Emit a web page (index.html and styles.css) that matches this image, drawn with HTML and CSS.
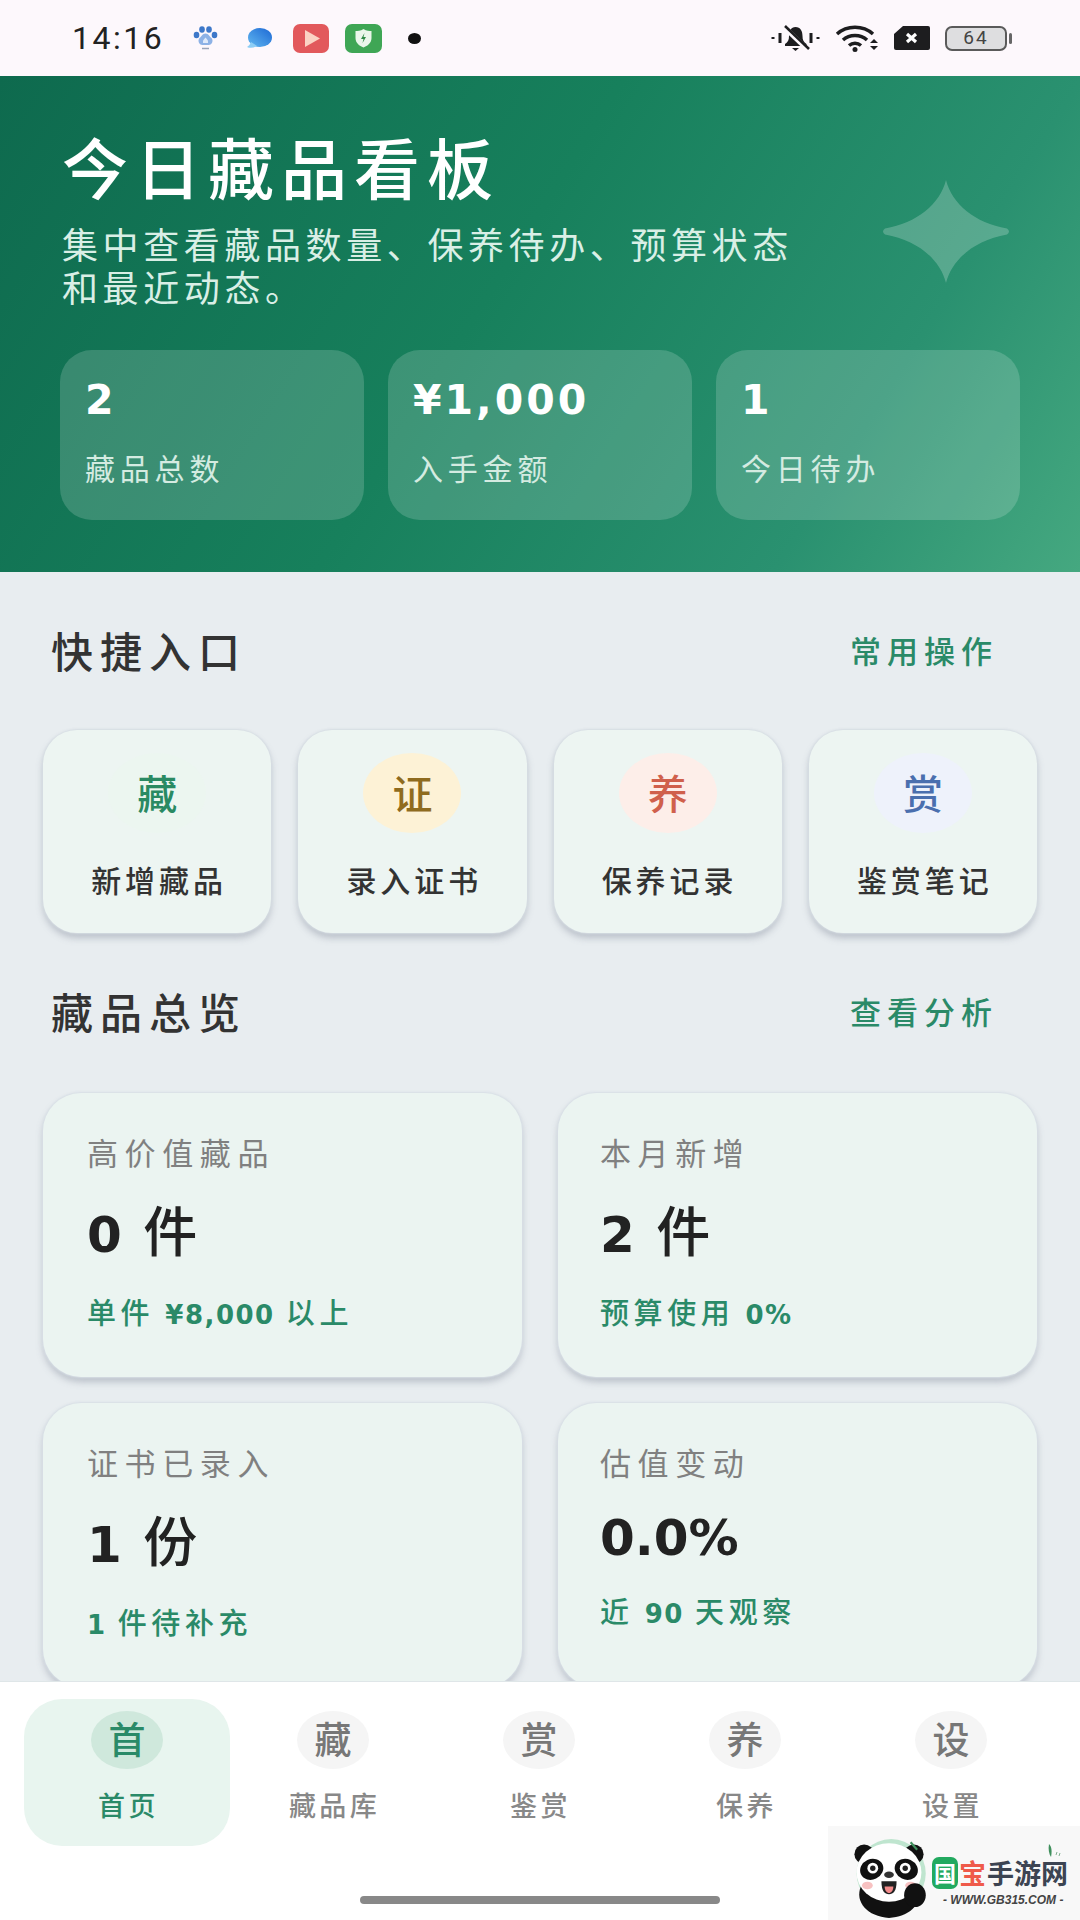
FILE: index.html
```html
<!DOCTYPE html>
<html lang="zh">
<head>
	<title>今日藏品看板</title>
	<meta charset="utf-8">
	<meta name="viewport" content="width=device-width, initial-scale=1">
	<link rel="stylesheet" href="styles.css">
</head>
<body>
<div class="screen">

	<!-- status bar -->
	<header class="status">
		<span class="time">14:16</span>
		<svg class="ic-paw" width="25" height="24" viewBox="0 0 25 24">
			<ellipse cx="3.500" cy="9" rx="2.800" ry="3.200" fill="#3d78c9"/>
			<ellipse cx="9" cy="3.500" rx="2.800" ry="3.200" fill="#3d78c9"/>
			<ellipse cx="16" cy="3.500" rx="2.800" ry="3.200" fill="#3d78c9"/>
			<ellipse cx="21.500" cy="9" rx="2.800" ry="3.200" fill="#3d78c9"/>
			<path d="M12.500 7.500c3 0 4 3 6 4.600 2 2 1 7-3 7h-6c-4 0-5-5-3-7 2-1.600 3-4.600 6-4.600z" fill="#8db2e6"/>
			<path d="M10 14.500l2.500-3 2.500 3v2.500h-5z" fill="#dfeafa"/>
			<path d="M9 22.500h7" stroke="#9aa4b8" stroke-width="1.500"/>
		</svg>
		<svg class="ic-ball" width="26" height="21" viewBox="0 0 26 21">
			<defs>
				<linearGradient id="ball" x1="1" y1="0" x2="0" y2="1">
					<stop offset="0" stop-color="#1c68d4"/>
					<stop offset="1" stop-color="#62b8f0"/>
				</linearGradient>
			</defs>
			<ellipse cx="14" cy="9.500" rx="12" ry="9.500" fill="url(#ball)"/>
			<path d="M5 14c-1 2-2 4-4 5 3 1.500 7 1 10-1z" fill="#8ccdf5"/>
		</svg>
		<svg class="ic-red" width="36" height="29" viewBox="0 0 36 29">
			<rect width="36" height="29" rx="7" fill="#e2595c"/>
			<path d="M12 6l15 8.500-15 8.500z" fill="#fbd3c4"/>
		</svg>
		<svg class="ic-green" width="37" height="29" viewBox="0 0 37 29">
			<rect width="37" height="29" rx="7" fill="#3fa655"/>
			<path d="M18.500 5c3 2 6 2 8 2v7c0 5-4 8-8 9.500-4-1.500-8-4.500-8-9.500V7c2 0 5 0 8-2z" fill="#eaf6ea"/>
			<path d="M19.500 9l-3.500 6h2.500l-1 4 3.500-6h-2.500z" fill="#2f8a45"/>
		</svg>
		<span class="dot"></span>

		<div class="status-right">
			<svg width="49" height="28" viewBox="0 0 49 28">
				<path d="M24.500 3c5 0 7 4 7 9 0 4 1 6 4 8v2H14v-2c3-2 4-4 4-8 0-5 2-9 6.500-9z" fill="#1d1d1f"/>
				<path d="M21 24h7l-3.500 3z" fill="#1d1d1f"/>
				<path d="M13 3l24 23" stroke="#fdf8fc" stroke-width="5"/>
				<path d="M14 2l24 23" stroke="#1d1d1f" stroke-width="2.500"/>
				<path d="M9 9v10M40 9v10" stroke="#1d1d1f" stroke-width="3"/>
				<path d="M2 13v2M47 13v2" stroke="#1d1d1f" stroke-width="3"/>
			</svg>
			<svg width="44" height="27" viewBox="0 0 44 27">
				<path d="M2 9c10-9 26-9 36 0" fill="none" stroke="#1d1d1f" stroke-width="3.500"/>
				<path d="M8 15c6.500-6 17.500-6 24 0" fill="none" stroke="#1d1d1f" stroke-width="3.500"/>
				<path d="M14 20.500c3.500-3 8.500-3 12 0" fill="none" stroke="#1d1d1f" stroke-width="3.500"/>
				<circle cx="20" cy="24.500" r="2.500" fill="#1d1d1f"/>
				<path d="M35 18h8l-4-4zM35 21h8l-4 4z" fill="#1d1d1f"/>
			</svg>
			<svg width="36" height="24" viewBox="0 0 36 24">
				<path d="M9 0h25a2 2 0 0 1 2 2v20a2 2 0 0 1-2 2H2a2 2 0 0 1-2-2V8z" fill="#1d1d1f"/>
				<path d="M13 8l9 8M22 8l-9 8" stroke="#fff" stroke-width="3.200"/>
			</svg>
			<div class="battery">
				<div class="battery-body">64</div>
				<span class="battery-nub"></span>
			</div>
		</div>
	</header>

	<!-- board header -->
	<section class="hero">
		<h1>今日藏品看板</h1>
		<p class="hero-desc">集中查看藏品数量、保养待办、预算状态<br>和最近动态。</p>
		<svg class="hero-star" width="130" height="103" viewBox="0 0 130 103">
			<path d="M65 0C71 24 94 43 126 48.500Q130 51.500 126 54.500C94 60 71 79 65 103C59 79 36 60 4 54.500Q0 51.500 4 48.500C36 43 59 24 65 0Z" fill="#fff" fill-opacity=".22"/>
		</svg>
		<div class="stats">
			<div class="stat">
				<div class="stat-num">2</div>
				<div class="stat-label">藏品总数</div>
			</div>
			<div class="stat">
				<div class="stat-num">¥1,000</div>
				<div class="stat-label">入手金额</div>
			</div>
			<div class="stat">
				<div class="stat-num">1</div>
				<div class="stat-label">今日待办</div>
			</div>
		</div>
	</section>

	<main class="content">
		<div class="sec-head">
			<h2>快捷入口</h2>
			<a class="sec-link">常用操作</a>
		</div>
		<div class="tiles">
			<div class="tile">
				<span class="tile-icon green">藏</span>
				<span class="tile-label">新增藏品</span>
			</div>
			<div class="tile">
				<span class="tile-icon amber">证</span>
				<span class="tile-label">录入证书</span>
			</div>
			<div class="tile">
				<span class="tile-icon red">养</span>
				<span class="tile-label">保养记录</span>
			</div>
			<div class="tile">
				<span class="tile-icon blue">赏</span>
				<span class="tile-label">鉴赏笔记</span>
			</div>
		</div>

		<div class="sec-head sec-head-2">
			<h2>藏品总览</h2>
			<a class="sec-link">查看分析</a>
		</div>
		<div class="cards">
			<div class="card">
				<div class="card-label">高价值藏品</div>
				<div class="card-value">0 <span class="unit">件</span></div>
				<div class="card-sub">单件 <span class="num">¥8,000</span> 以上</div>
			</div>
			<div class="card">
				<div class="card-label">本月新增</div>
				<div class="card-value">2 <span class="unit">件</span></div>
				<div class="card-sub">预算使用 <span class="num">0%</span></div>
			</div>
			<div class="card">
				<div class="card-label">证书已录入</div>
				<div class="card-value">1 <span class="unit">份</span></div>
				<div class="card-sub"><span class="num">1</span> 件待补充</div>
			</div>
			<div class="card">
				<div class="card-label">估值变动</div>
				<div class="card-value card-value-plain">0.0%</div>
				<div class="card-sub">近 <span class="num">90</span> 天观察</div>
			</div>
		</div>
	</main>

	<!-- bottom tabs -->
	<nav class="tabs">
		<div class="tab active"><span class="tab-icon">首</span><span class="tab-label">首页</span></div>
		<div class="tab"><span class="tab-icon">藏</span><span class="tab-label">藏品库</span></div>
		<div class="tab"><span class="tab-icon">赏</span><span class="tab-label">鉴赏</span></div>
		<div class="tab"><span class="tab-icon">养</span><span class="tab-label">保养</span></div>
		<div class="tab"><span class="tab-icon">设</span><span class="tab-label">设置</span></div>
	</nav>
	<div class="home-bar"></div>

	<!-- site watermark, sits over the corner -->
	<div class="mark">
		<svg class="panda" width="88" height="80" viewBox="0 0 80 74">
			<circle cx="42" cy="32" r="32" fill="#bfe5cf"/>
			<path d="M14 44C8 58 20 72 40 73C58 72 70 62 70 44z" fill="#111"/>
			<circle cx="17" cy="14" r="9" fill="#111"/>
			<circle cx="63" cy="14" r="9" fill="#111"/>
			<ellipse cx="40" cy="31" rx="30" ry="27" fill="#fff"/>
			<ellipse cx="24" cy="28" rx="11" ry="9.500" fill="#111" transform="rotate(-25 24 28)"/>
			<ellipse cx="56" cy="28" rx="11" ry="9.500" fill="#111" transform="rotate(25 56 28)"/>
			<circle cx="25" cy="27" r="5" fill="#fff"/>
			<circle cx="55" cy="27" r="5" fill="#fff"/>
			<circle cx="25" cy="27" r="2.500" fill="#222"/>
			<circle cx="55" cy="27" r="2.500" fill="#222"/>
			<ellipse cx="40" cy="33" rx="4.500" ry="3" fill="#333"/>
			<path d="M33 39h14c0 9-3 12-7 12s-7-3-7-12z" fill="#222"/>
			<path d="M36 44h8c0 4-2 6-4 6s-4-2-4-6z" fill="#f28a8a"/>
			<ellipse cx="20" cy="43" rx="5" ry="3.500" fill="#f7c1c1"/>
			<ellipse cx="60" cy="43" rx="5" ry="3.500" fill="#f7c1c1"/>
			<ellipse cx="64" cy="52" rx="10" ry="11" fill="#111"/>
			<path d="M60 3l6 7" stroke="#3f8f5c" stroke-width="2"/>
		</svg>
		<div class="mark-text">
			<div class="mark-name">
				<span class="mark-box">国</span><span class="mark-red">宝</span><span>手游网</span>
			</div>
			<div class="mark-url">- WWW.GB315.COM -</div>
		</div>
		<svg class="mark-leaf" width="14" height="16" viewBox="0 0 14 16">
			<path d="M2 1c3 3 3 8 2 13-2-3-3-8-2-13z" fill="#3f8f5c"/>
			<path d="M9 12l1-3M12 13l1-3" stroke="#7fae8e" stroke-width="1"/>
		</svg>
	</div>

</div>
</body>
</html>
```

FILE: styles.css
```css
* {
	box-sizing: border-box;
}

body {
	margin: 0;
	background: #e8edf0;
	font-family: "Noto Sans CJK SC", "Noto Sans", sans-serif;
}

.screen {
	position: relative;
	width: 1080px;
	height: 1920px;
	overflow: hidden;
	display: flex;
	flex-direction: column;
}

/* status bar */
.status {
	height: 76px;
	flex: none;
	display: flex;
	align-items: center;
	padding: 0 68px 0 72px;
	background: #fdf8fc;
}
.time {
	font-family: Roboto, sans-serif;
	font-size: 32px;
	letter-spacing: 2.5px;
	color: #222;
	width: 93px;
}
.status svg {
	flex: none;
}
.ic-paw {
	margin-left: 28px;
}
.ic-ball {
	margin-left: 28px;
}
.ic-red {
	margin-left: 21px;
}
.ic-green {
	margin-left: 16px;
}
.dot {
	width: 13px;
	height: 11px;
	margin-left: 26px;
	border-radius: 50%;
	background: #111;
}
.status-right {
	margin-left: auto;
	display: flex;
	align-items: center;
	gap: 15px;
}
.battery {
	display: flex;
	align-items: center;
	gap: 2px;
}
.battery-body {
	width: 62px;
	height: 25px;
	border: 2.5px solid #5a5a5a;
	border-radius: 7px;
	background: #dedee0;
	text-align: center;
	font-family: Roboto, sans-serif;
	font-size: 19px;
	line-height: 20px;
	letter-spacing: 2px;
	color: #444;
}
.battery-nub {
	width: 3px;
	height: 11px;
	border-radius: 2px;
	background: #666;
}

/* hero */
.hero {
	position: relative;
	height: 496px;
	flex: none;
	padding: 41px 60px 0;
	background: linear-gradient(122deg, #0e6a4e 0%, #17805c 45%, #2a9170 78%, #45a880 100%);
	color: #fff;
}
.hero h1 {
	margin: 0;
	padding-left: 2px;
	font-size: 66px;
	font-weight: 500;
	line-height: 96px;
	letter-spacing: 7px;
}
.hero-desc {
	margin: 9px 0 0;
	padding-left: 2px;
	font-size: 36px;
	line-height: 43px;
	letter-spacing: 4.6px;
	color: #d9efe6;
}
.hero-star {
	position: absolute;
	left: 881px;
	top: 104px;
}
.stats {
	display: flex;
	gap: 24px;
	margin-top: 42px;
}
.stat {
	flex: 1;
	height: 170px;
	padding: 25px 25px 0;
	border-radius: 32px;
	background: rgba(255, 255, 255, .17);
}
.stat-num {
	font-family: "DejaVu Sans", sans-serif;
	font-size: 41px;
	font-weight: 700;
	line-height: 50px;
	letter-spacing: 3px;
}
.stat-label {
	margin-top: 22px;
	font-size: 30px;
	line-height: 40px;
	letter-spacing: 4.8px;
	color: #d4ebe1;
}

/* page content */
.content {
	flex: 1;
	min-height: 0;
	overflow: hidden;
	padding-top: 49px;
}
.sec-head {
	display: flex;
	justify-content: space-between;
	align-items: center;
	height: 56px;
	padding: 0 82px 0 51px;
	margin-bottom: 53px;
}
.sec-head-2 {
	margin-top: 49px;
	margin-bottom: 55px;
}
.sec-head h2 {
	margin: 0;
	font-size: 42px;
	font-weight: 500;
	letter-spacing: 7px;
	color: #333;
}
.sec-link {
	font-size: 31px;
	font-weight: 500;
	letter-spacing: 6px;
	color: #2a8a68;
}

.tiles {
	display: grid;
	grid-template-columns: repeat(4, 1fr);
	gap: 27px;
	padding: 0 43px;
}
.tile {
	height: 203px;
	padding-top: 23px;
	display: flex;
	flex-direction: column;
	align-items: center;
	border-radius: 34px;
	background: #edf5f2;
	box-shadow: 0 0 2px 1px #d6dde3, 0 5px 7px rgba(100, 110, 130, .35);
}
.tile-icon {
	width: 98px;
	height: 80px;
	border-radius: 50%;
	font-size: 40px;
	font-weight: 500;
	line-height: 78px;
	text-align: center;
}
.tile-icon.green {
	background: #ecf6f0;
	color: #2a8a63;
}
.tile-icon.amber {
	background: #fdf2d6;
	color: #8f6b1e;
}
.tile-icon.red {
	background: #fdeee9;
	color: #d0604c;
}
.tile-icon.blue {
	background: #eef2fb;
	color: #4a6fae;
}
.tile-label {
	margin-top: 28px;
	margin-right: -4px;
	font-size: 30px;
	font-weight: 500;
	line-height: 36px;
	letter-spacing: 4px;
	color: #333;
}

.cards {
	display: grid;
	grid-template-columns: 479px 479px;
	column-gap: 36px;
	row-gap: 26px;
	padding: 0 43px;
}
.card {
	height: 284px;
	padding: 39px 44px 0;
	border-radius: 38px;
	background: #ebf4f1;
	box-shadow: 0 0 2px 1px #d8dfe6, 0 5px 7px rgba(100, 110, 130, .35);
}
.card:nth-child(even) {
	padding-left: 42px;
}
.card-label {
	font-size: 31px;
	line-height: 40px;
	letter-spacing: 6.6px;
	color: #808080;
}
.card-value {
	height: 66px;
	margin-top: 30px;
	font-family: "DejaVu Sans", "Noto Sans CJK SC", sans-serif;
	font-size: 50px;
	font-weight: 700;
	line-height: 66px;
	word-spacing: 4px;
	color: #222;
}
.card-value .unit {
	font-family: "Noto Sans CJK SC", sans-serif;
	font-size: 54px;
	font-weight: 500;
	line-height: 0;
}
.card-value-plain {
	height: 57px;
	margin-top: 28px;
	line-height: 57px;
}
.card-sub {
	margin-top: 25px;
	font-size: 29px;
	font-weight: 500;
	line-height: 36px;
	letter-spacing: 4.6px;
	color: #2a8a68;
}
.card-sub .num {
	font-family: "DejaVu Sans", sans-serif;
	font-size: 26px;
	font-weight: 700;
	line-height: 0;
	letter-spacing: 1.5px;
}

/* bottom tabs */
.tabs {
	position: absolute;
	left: 0;
	right: 0;
	top: 1681px;
	height: 239px;
	display: grid;
	grid-template-columns: repeat(5, 206px);
	align-items: start;
	padding: 17px 0 0 24px;
	background: #fff;
	border-top: 1px solid #dfe6e8;
}
.tab {
	height: 147px;
	padding-top: 12px;
	display: flex;
	flex-direction: column;
	align-items: center;
	color: #888;
}
.tab.active {
	border-radius: 38px;
	background: #e8f5ef;
	color: #2a8a68;
}
.tab-icon {
	width: 72px;
	height: 58px;
	border-radius: 50%;
	background: #f5f5f5;
	font-size: 37px;
	font-weight: 500;
	line-height: 55px;
	text-align: center;
	color: #777;
}
.tab.active .tab-icon {
	background: #cfe8dc;
	color: #2a8a68;
}
.tab-label {
	margin-top: 18px;
	margin-right: -3px;
	font-size: 27px;
	font-weight: 500;
	line-height: 36px;
	letter-spacing: 3.4px;
}
.home-bar {
	position: absolute;
	left: 360px;
	top: 1896px;
	width: 360px;
	height: 8px;
	border-radius: 4px;
	background: #888;
}

/* watermark */
.mark {
	position: absolute;
	left: 828px;
	top: 1826px;
	width: 252px;
	height: 94px;
	background: #f8f8f8;
}
.panda {
	position: absolute;
	left: 17px;
	top: 13px;
}
.mark-text {
	position: absolute;
	left: 104px;
	top: 30px;
	width: 140px;
}
.mark-name {
	display: flex;
	align-items: center;
	height: 34px;
	font-size: 27px;
	font-weight: 700;
	line-height: 34px;
	color: #3c4452;
}
.mark-box {
	width: 26px;
	height: 32px;
	border-radius: 7px;
	background: #22a95f;
	color: #fff;
	font-size: 22px;
	line-height: 31px;
	text-align: center;
}
.mark-red {
	width: 29px;
	text-align: center;
	color: #ef5a4a;
}
.mark-url {
	margin-top: 3px;
	padding-left: 11px;
	font-family: "Liberation Sans", sans-serif;
	font-size: 12px;
	font-style: italic;
	font-weight: 700;
	line-height: 14px;
	color: #444;
	white-space: nowrap;
}
.mark-leaf {
	position: absolute;
	left: 219px;
	top: 17px;
}
```
